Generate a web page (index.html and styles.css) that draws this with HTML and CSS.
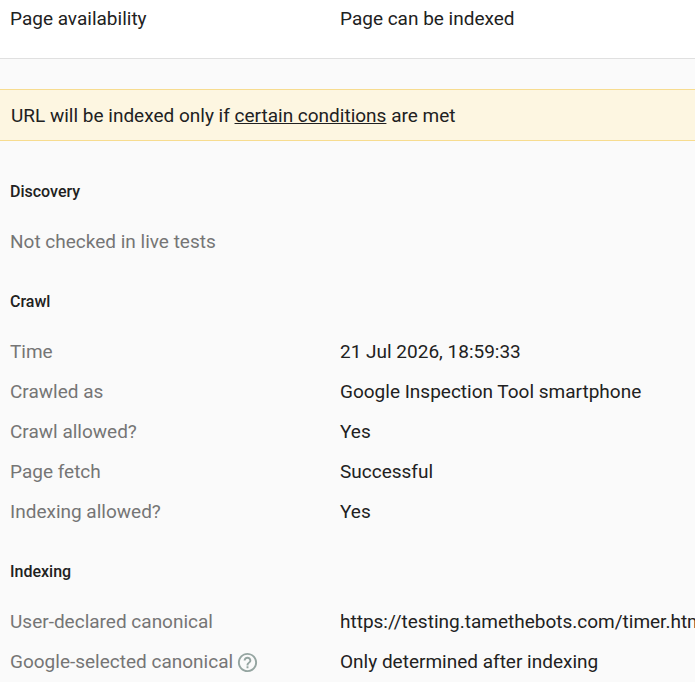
FILE: index.html
```html
<!DOCTYPE html>
<html lang="en">
<head>
  <meta charset="UTF-8">
  <meta name="viewport" content="width=device-width, initial-scale=1.0">
  <title>URL Inspection</title>
  <link rel="stylesheet" href="styles.css">
</head>
<body>

  <dl class="summary">
    <div class="row">
      <dt>Page availability</dt>
      <dd>Page can be indexed</dd>
    </div>
  </dl>

  <p class="notice">URL will be indexed only if <a href="#conditions">certain conditions</a> are met</p>

  <main class="details">
    <section>
      <h2>Discovery</h2>
      <p class="empty">Not checked in live tests</p>
    </section>

    <section>
      <h2>Crawl</h2>
      <dl>
        <div class="row">
          <dt>Time</dt>
          <dd>21 Jul 2026, 18:59:33</dd>
        </div>
        <div class="row">
          <dt>Crawled as</dt>
          <dd>Google Inspection Tool smartphone</dd>
        </div>
        <div class="row">
          <dt>Crawl allowed?</dt>
          <dd>Yes</dd>
        </div>
        <div class="row">
          <dt>Page fetch</dt>
          <dd>Successful</dd>
        </div>
        <div class="row">
          <dt>Indexing allowed?</dt>
          <dd>Yes</dd>
        </div>
      </dl>
    </section>

    <section>
      <h2>Indexing</h2>
      <dl>
        <div class="row">
          <dt>User-declared canonical</dt>
          <dd>https://testing.tamethebots.com/timer.html</dd>
        </div>
        <div class="row">
          <dt>
            Google-selected canonical
            <button class="help" type="button" aria-label="Help">
              <svg viewBox="0 0 24 24" width="23" height="23" aria-hidden="true">
                <path d="M11 18h2v-2h-2v2zm1-16C6.480 2 2 6.480 2 12s4.480 10 10 10 10-4.480 10-10S17.520 2 12 2zm0 18c-4.410 0-8-3.590-8-8s3.590-8 8-8 8 3.590 8 8-3.590 8-8 8zm0-14c-2.210 0-4 1.790-4 4h2c0-1.100.9-2 2-2s2 .9 2 2c0 2-3 1.750-3 5h2c0-2.250 3-2.500 3-5 0-2.210-1.790-4-4-4z"/>
              </svg>
            </button>
          </dt>
          <dd>Only determined after indexing</dd>
        </div>
      </dl>
    </section>
  </main>

</body>
</html>
```

FILE: styles.css
```css
* {
  box-sizing: border-box;
}
body {
  margin: 0;
  overflow: hidden;
  background-color: #fafafa;
  color: #212121;
  font-family: Roboto, Arial, sans-serif;
  font-size: 19px;
  line-height: 40px;
}
dl, dd, p, h2 {
  margin: 0;
}
.row {
  display: flex;
  white-space: nowrap;
}
.row dt {
  display: flex;
  align-items: center;
  flex: 0 0 330px;
  color: #757575;
}
.summary {
  padding: 0 10px 20px;
  background-color: #fff;
  border-bottom: 1px solid #e0e0e0;
  line-height: 38px;
}
.summary .row dt {
  color: inherit;
}
.notice {
  margin: 30px 0;
  padding: 6px 11px 4px;
  background-color: #fdf6e1;
  border-top: 1px solid #f7dc8f;
  border-bottom: 1px solid #f7dc8f;
}
.notice a {
  color: inherit;
  text-decoration-thickness: 1px;
  text-underline-offset: 1px;
}
.details {
  padding: 1px 10px 0;
}
.details section {
  margin-bottom: 20px;
}
.details h2 {
  margin-bottom: 10px;
  font-size: 16px;
  font-weight: 500;
}
.empty {
  color: #757575;
}
.help {
  display: flex;
  margin-left: 3px;
  padding: 0;
  border: 0;
  background: none;
  color: #95a5a1;
}
.help svg {
  fill: currentColor;
}
```
